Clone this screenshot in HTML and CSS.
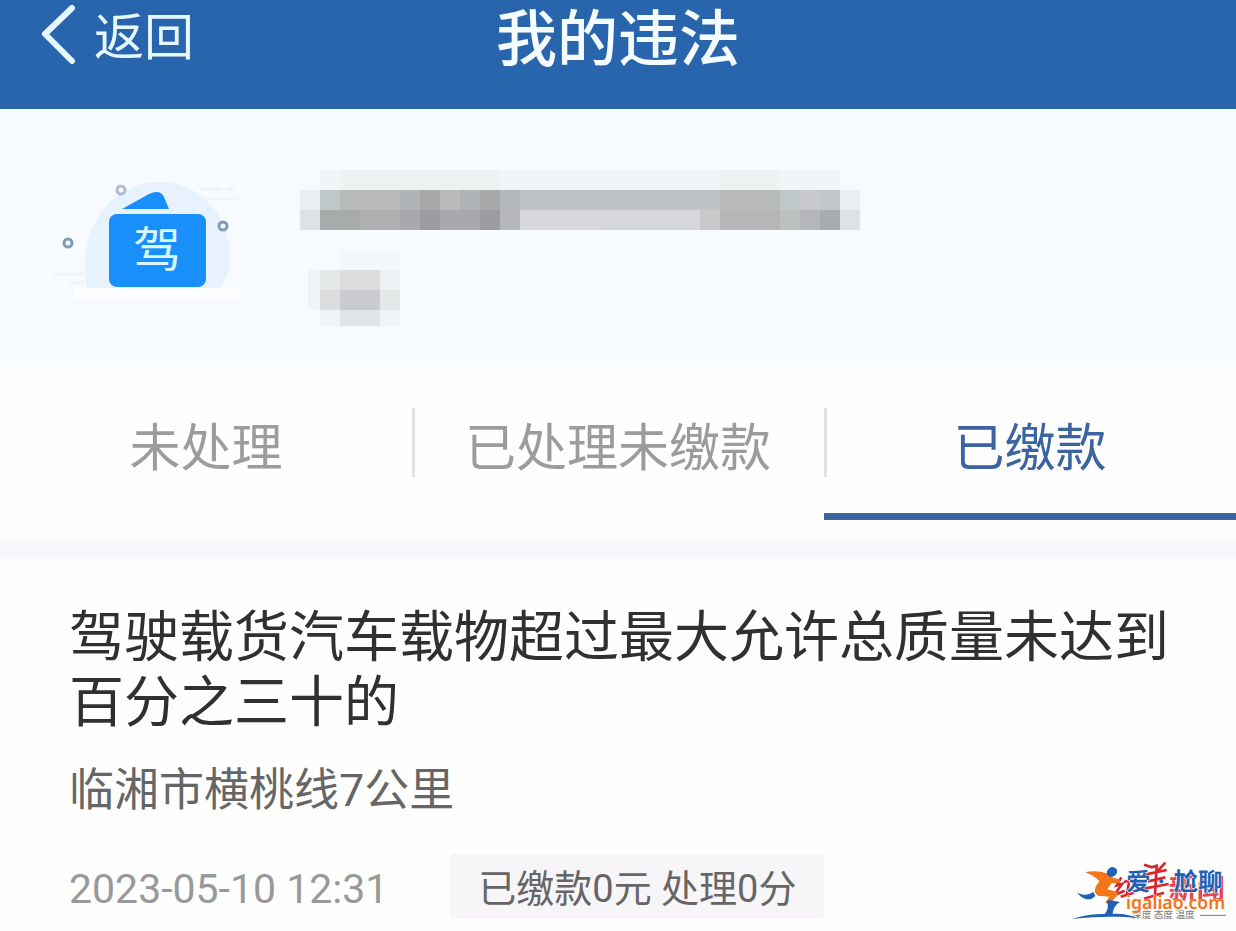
FILE: index.html
```
<!DOCTYPE html>
<html lang="zh-CN">
<head>
  <meta charset="UTF-8" />
  <meta name="viewport" content="width=device-width, initial-scale=1.0"/>
  <title>我的违法</title>
  <link rel="stylesheet" href="styles.css">
</head>
<body>
  <header class="topbar">
    <button type="button" class="back">
      <svg class="back-icon" viewBox="0 0 36 60" aria-hidden="true">
        <path d="M32 4 L5 30 L32 57" />
      </svg>
      <span>返回</span>
    </button>
    <h1>我的违法</h1>
  </header>

  <main>
    <section class="profile">
      <svg class="license-icon" viewBox="0 0 190 130" role="img" aria-label="驾驶证">
        <path class="cloud" d="M37 113 C26 57 58 7 110 7 C158 7 187 53 178 99 L170 113 Z" />
        <path class="ground" d="M24 113 H190 V124 H24 Z" />
        <path class="streak" d="M151 14 H172 M176 14 H184 M150 24 H188 M4 99 H38 M20 108 H34" />
        <path class="card" d="M72 34 L99 19 Q110 14 114 22 L119 34 Z" />
        <rect class="card" x="59" y="39" width="97" height="73" rx="8" />
        <text x="107" y="92" text-anchor="middle">驾</text>
        <circle class="dot pale" cx="71" cy="15" r="4" />
        <circle class="dot" cx="173" cy="51" r="4" />
        <circle class="dot" cx="18" cy="68" r="4" />
      </svg>

      <div class="masked">
        <svg class="mask-name" viewBox="0 0 560 60" shape-rendering="crispEdges" role="img" aria-label="已隐藏">
          <path fill="#f1f5f7" d="M20 0h520v20h-520z" />
          <path fill="#edf1f2" d="M40 0h160v20h-160zM420 0h60v20h-60z" />
          <path fill="#e9eef0" d="M0 20h20v20h-20zM540 20h20v20h-20z" />
          <path fill="#dfe2e4" d="M0 40h20v20h-20zM540 40h20v20h-20z" />
          <path fill="#c0c7c9" d="M20 20h20v20h-20zM480 20h20v20h-20zM520 20h20v20h-20z" />
          <path fill="#b9babb" d="M40 20h60v20h-60zM140 20h20v20h-20zM420 20h60v20h-60z" />
          <path fill="#b0b4b6" d="M100 20h20v20h-20zM160 20h20v20h-20z" />
          <path fill="#a9a9ac" d="M120 20h20v20h-20zM180 20h20v20h-20z" />
          <path fill="#b3b7b9" d="M200 20h20v40h-20z" />
          <path fill="#c0c3c6" d="M220 20h200v20h-200z" />
          <path fill="#c8c8cd" d="M500 20h20v20h-20z" />
          <path fill="#a7abaa" d="M20 40h40v20h-40z" />
          <path fill="#b0b0b2" d="M60 40h40v20h-40z" />
          <path fill="#a9a8ac" d="M100 40h20v20h-20zM140 40h40v20h-40z" />
          <path fill="#9d9b9f" d="M120 40h20v20h-20zM180 40h20v20h-20z" />
          <path fill="#d8d7dd" d="M220 40h80v20h-80z" />
          <path fill="#d6d7da" d="M300 40h100v20h-100z" />
          <path fill="#c9c9cb" d="M400 40h20v20h-20z" />
          <path fill="#b6b6b8" d="M420 40h60v20h-60z" />
          <path fill="#bbc1bf" d="M480 40h20v20h-20z" />
          <path fill="#b4b6b9" d="M500 40h20v20h-20z" />
          <path fill="#a9acaf" d="M520 40h20v20h-20z" />
        </svg>
        <svg class="mask-type" viewBox="0 0 100 76" shape-rendering="crispEdges" role="img" aria-label="已隐藏">
          <path fill="#f4f7fa" d="M40 0h60v20h-60z" />
          <path fill="#f1f4f6" d="M8 20h12v40h-12zM20 60h20v16h-20zM80 60h20v16h-20z" />
          <path fill="#e5e8e9" d="M20 20h20v20h-20zM80 40h20v20h-20z" />
          <path fill="#eef2f5" d="M80 20h20v20h-20z" />
          <path fill="#dbddde" d="M40 20h40v20h-40zM20 40h20v20h-20z" />
          <path fill="#c9cbce" d="M40 40h40v20h-40z" />
          <path fill="#e1e5e8" d="M40 60h40v16h-40z" />
        </svg>
      </div>
    </section>

    <nav class="tabs">
      <button type="button" class="tab">未处理</button>
      <button type="button" class="tab">已处理未缴款</button>
      <button type="button" class="tab active">已缴款</button>
    </nav>

    <article class="record">
      <h2>驾驶载货汽车载物超过最大允许总质量未达到百分之三十的</h2>
      <p class="place">临湘市横桃线7公里</p>
      <div class="meta">
        <time datetime="2023-05-10T12:31">2023-05-10 12:31</time>
        <span class="badge">已缴款0元 处理0分</span>
      </div>
    </article>
  </main>

  <svg class="watermark" viewBox="60 60 480 192" role="img" aria-label="爱尬聊 igaliao.com">
    <!-- news logo underneath -->
    <g class="wm-red">
      <path d="M214 112 L200 136 L216 132 L192 166 L224 152 M222 126 L250 118 M238 122 L230 166 M212 170 L252 158" />
      <path d="M282 74 L306 82 L324 76 M346 68 L322 94 M284 104 L350 90 M294 124 L346 112 M270 148 L356 132 M320 80 L314 182 M282 176 L342 158" />
      <text x="356" y="176">新闻</text>
    </g>
    <text class="wm-slogan" x="246" y="235">深度 态度 温度</text>
    <path class="wm-line" d="M450 226 H528" />
    <!-- runner -->
    <path class="wm-orange" d="M106 97 C126 92 150 93 170 100 L186 112 L212 120 L207 130 L184 130 L172 148 L202 156 L204 164 L178 192 L166 188 L178 170 L144 167 L134 156 L136 142 L148 124 C136 110 122 104 106 97 Z" />
    <ellipse class="wm-blue" cx="186" cy="96" rx="16" ry="14" transform="rotate(-35 186 96)" />
    <path class="wm-blue" d="M80 156 C92 166 112 168 130 156 L136 167 C124 184 98 182 80 156 Z" />
    <path class="wm-blue" d="M170 182 C182 178 194 184 210 186 C194 196 190 208 188 222 C216 220 240 226 264 234 C196 228 138 230 66 237 C98 226 134 222 164 222 C174 210 176 198 170 182 Z" />
    <text class="wm-name" x="229" y="151">爱</text>
    <circle class="wm-blue" cx="334" cy="124" r="6" />
    <text class="wm-name" x="371" y="151">尬聊</text>
    <text class="wm-site" x="228" y="208">igaliao.com</text>
  </svg>
</body>
</html>
```
FILE: styles.css
```
:root {
  --blue: #2965ad;
  --tab-blue: #3b64a3;
  --side: 69px;
}

* {
  box-sizing: border-box;
}

body {
  margin: 0;
  min-height: 100vh;
  position: relative;
  background: #fefefe;
  color: #303030;
  font-family: Roboto, "Noto Sans CJK SC", sans-serif;
}

button {
  border: 0;
  padding: 0;
  background: none;
  font: inherit;
  cursor: pointer;
}

h1, h2, p {
  margin: 0;
  font-weight: 400;
}

/* top bar */
.topbar {
  display: grid;
  grid-template-columns: 1fr auto 1fr;
  align-items: start;
  height: 109px;
  padding: 0 40px;
  background: var(--blue);
  color: #f4fcff;
}

.topbar h1 {
  font-size: 61px;
  font-weight: 500;
  line-height: 80px;
}

.back {
  display: flex;
  align-items: center;
  justify-self: start;
  gap: 18px;
  height: 68px;
  color: #e6f8ff;
  font-size: 50px;
  line-height: 60px;
}

.back span {
  padding-top: 8px;
}

.back-icon {
  width: 36px;
  height: 60px;
  fill: none;
  stroke: currentColor;
  stroke-width: 6;
  stroke-linecap: round;
  stroke-linejoin: round;
}

/* driver info */
.profile {
  display: flex;
  gap: 50px;
  height: 266px;
  padding: 61px 50px 0;
  background: linear-gradient(#f7fbff 94%, #fefefe);
}

.license-icon {
  width: 190px;
  height: 130px;
  margin-top: 5px;
}

.license-icon .cloud { fill: #e8f2fd; }
.license-icon .ground { fill: #fdfeff; }
.license-icon .card { fill: #188ffb; }

.license-icon .streak {
  fill: none;
  stroke: #eef4fa;
  stroke-width: 3;
}

.license-icon .dot {
  fill: #f4f9ff;
  stroke: #819bb9;
  stroke-width: 3;
}

.license-icon .pale { stroke: #b3bbd9; }

.license-icon text {
  fill: #d9f6ff;
  font-size: 48px;
}

.masked {
  display: flex;
  flex-direction: column;
  gap: 20px;
  padding-left: 10px;
}

.mask-name {
  width: 560px;
  height: 60px;
}

.mask-type {
  width: 100px;
  height: 76px;
}

/* tabs */
.tabs {
  display: grid;
  grid-template-columns: repeat(3, 1fr);
  padding: 33px 0 21px;
}

.tab {
  height: 112px;
  padding-bottom: 24px;
  border-bottom: 7px solid transparent;
  background: linear-gradient(#e2e2e2, #e2e2e2) left top / 3px 69px no-repeat;
  color: #9c9c9c;
  font-size: 51px;
  line-height: 69px;
}

.tab:first-child {
  background: none;
}

.tab.active {
  border-bottom-color: var(--tab-blue);
  color: var(--tab-blue);
}

/* violation record */
.record {
  padding: 64px 60px 0 var(--side);
  background: linear-gradient(#f8f8fc 14px, #fefefe 24px);
}

.record h2 {
  font-size: 55px;
  line-height: 65px;
}

.place {
  margin-top: 24px;
  color: #666;
  font-size: 45px;
  line-height: 64px;
}

.meta {
  display: flex;
  align-items: center;
  gap: 62px;
  margin-top: 31px;
  color: #999;
  font-size: 41px;
  line-height: 60px;
}

.meta time {
  padding-top: 5px;
}

.badge {
  padding: 5px 28px 0;
  border-radius: 4px;
  background: #f8f5f8;
  color: #666;
  font-size: 38px;
}

/* site mark over the lower right corner */
.watermark {
  position: absolute;
  right: 6px;
  bottom: 7px;
  width: 160px;
  height: 64px;
}

.wm-orange { fill: #f4761a; }
.wm-blue { fill: #1f62b5; }

.wm-red path {
  fill: none;
  stroke: #d8262f;
  stroke-width: 8;
}

.wm-red text {
  fill: #e2474b;
  font-size: 84px;
  font-weight: 700;
}

.wm-slogan {
  fill: #777;
  font-size: 29px;
}

.wm-line {
  stroke: #777;
  stroke-width: 3;
}

.wm-name {
  fill: #1f62b5;
  stroke: #fff;
  stroke-width: 3;
  paint-order: stroke;
  font-size: 73px;
  font-weight: 700;
}

.wm-site {
  fill: #f97112;
  stroke: #fff;
  stroke-width: 2;
  paint-order: stroke;
  font-family: "Noto Sans", sans-serif;
  font-size: 53px;
  font-weight: 600;
}
```
